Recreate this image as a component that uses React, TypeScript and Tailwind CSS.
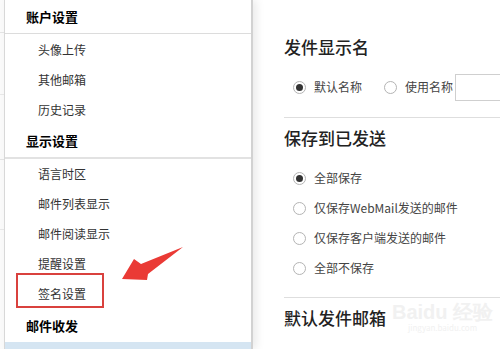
import React from "react";

const font = { fontFamily: '"Noto Sans CJK SC", "Noto Sans", sans-serif' };

function Radio({ checked }: { checked?: boolean }) {
  return (
    <span className="flex h-[13px] w-[13px] shrink-0 items-center justify-center rounded-full border border-[#b4b4b4] bg-white">
      {checked && <span className="h-[7px] w-[7px] rounded-full bg-[#333]" />}
    </span>
  );
}

function RadioItem({ label, checked }: { label: string; checked?: boolean }) {
  return (
    <div className="flex h-[30px] items-center gap-[8px] whitespace-nowrap pl-[9px] text-[12px] text-[#444]">
      <Radio checked={checked} />
      <span>{label}</span>
    </div>
  );
}

function MenuHead({ label, h, border }: { label: string; h: string; border?: string }) {
  return (
    <div className={`flex items-center pl-[21px] text-[13px] font-bold text-black ${h} ${border ?? ""}`}>
      {label}
    </div>
  );
}

function MenuItem({ label }: { label: string }) {
  return <div className="flex h-[30px] items-center pl-[33px] text-[12px] text-[#333]">{label}</div>;
}

export default function App() {
  return (
    <div className="relative flex h-[349px] w-[500px] overflow-hidden bg-white" style={font}>
      {/* page behind the panel */}
      <div className="flex w-[4px] shrink-0 flex-col bg-[#fafafa]">
        <div className="h-[33px] border-b border-[#e4e4e4]" />
        <div className="h-[62px] border-b border-[#e8e8e8]" />
        <div className="h-[65px] border-b border-[#e4e4e4]" />
        <div className="h-[70px] border-b border-[#e8e8e8]" />
        <div className="flex-1" />
      </div>

      {/* dropdown panel */}
      <div className="relative z-10 flex w-[249px] shrink-0 flex-col border-l border-r-2 border-l-[#d8d8d8] border-r-[#d2d2d2] bg-white shadow-[4px_0_8px_rgba(0,0,0,0.08)]">
        <MenuHead label="账户设置" h="h-[34px]" border="border-b border-[#dcdcdc]" />
        <div className="h-[1px]" />
        <MenuItem label="头像上传" />
        <MenuItem label="其他邮箱" />
        <MenuItem label="历史记录" />
        <MenuHead label="显示设置" h="h-[34px]" border="border-b-2 border-[#e2e2e2]" />
        <MenuItem label="语言时区" />
        <MenuItem label="邮件列表显示" />
        <MenuItem label="邮件阅读显示" />
        <MenuItem label="提醒设置" />
        <div className="relative">
          <MenuItem label="签名设置" />
          <div className="absolute left-[11px] top-[-6px] h-[35px] w-[88px] border-2 border-[#d9413e]" />
        </div>
        <MenuHead label="邮件收发" h="h-[33px]" />
        <div className="flex-1 bg-[#d5e5f2]" />
      </div>

      {/* right content */}
      <div className="flex min-w-0 flex-1 flex-col pl-[31px]">
        <div className="mt-[33px] flex h-[28px] items-center text-[17px] font-medium text-[#222]">发件显示名</div>
        <div className="mt-[12px] flex h-[28px] items-center whitespace-nowrap">
          <div className="flex shrink-0 items-center gap-[8px] pl-[9px] text-[12px] text-[#444]">
            <Radio checked />
            <span>默认名称</span>
          </div>
          <div className="ml-[22px] flex shrink-0 items-center gap-[8px] text-[12px] text-[#444]">
            <Radio />
            <span>使用名称</span>
          </div>
          <div className="ml-[2px] h-[27px] w-[80px] shrink-0 border border-[#cfcfcf] bg-white" />
        </div>
        <div className="mt-[16px] border-t border-[#dedede]" />
        <div className="mt-[6px] flex h-[28px] items-center text-[17px] font-medium text-[#222]">保存到已发送</div>
        <div className="mt-[11px] flex flex-col">
          <RadioItem label="全部保存" checked />
          <RadioItem label="仅保存WebMail发送的邮件" />
          <RadioItem label="仅保存客户端发送的邮件" />
          <RadioItem label="全部不保存" />
        </div>
        <div className="mt-[14px] border-t border-[#dedede]" />
        <div className="mt-[6px] flex h-[28px] items-center text-[17px] font-medium text-[#222]">默认发件邮箱</div>
      </div>

      {/* watermark */}
      <div className="pointer-events-none absolute left-[392px] top-[302px] flex flex-col items-center whitespace-nowrap leading-none text-[#f1f1f1]">
        <span className="text-[20px] font-bold" style={{ fontFamily: '"Liberation Sans", sans-serif' }}>
          Baidu 经验
        </span>
        <span className="mt-[2px] text-[8px]">jingyan.baidu.com</span>
      </div>

      {/* red arrow annotation */}
      <svg className="pointer-events-none absolute left-0 top-0 z-20" width="500" height="349" viewBox="0 0 500 349">
        <polygon points="122,279 134,259 141,264 183,247 148,274 147,280" fill="#ea3a35" />
      </svg>
    </div>
  );
}
